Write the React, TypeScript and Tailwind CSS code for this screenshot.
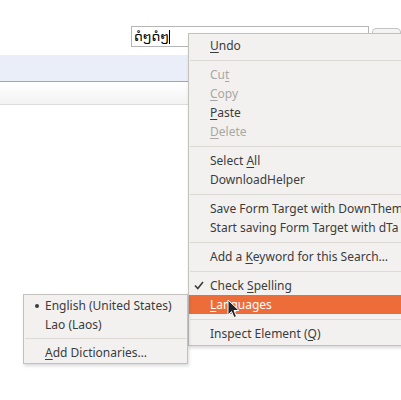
import React from 'react';

type Item =
  | { sep: true }
  | {
      sep?: false;
      pre: string;
      u?: string;
      post?: string;
      disabled?: boolean;
      check?: boolean;
      bullet?: boolean;
      active?: boolean;
    };

const mainItems: Item[] = [
  { pre: '', u: 'U', post: 'ndo' },
  { sep: true },
  { pre: 'Cu', u: 't', post: '', disabled: true },
  { pre: '', u: 'C', post: 'opy', disabled: true },
  { pre: '', u: 'P', post: 'aste' },
  { pre: '', u: 'D', post: 'elete', disabled: true },
  { sep: true },
  { pre: 'Select ', u: 'A', post: 'll' },
  { pre: 'DownloadHelper' },
  { sep: true },
  { pre: 'Save Form Target with DownThemAll!' },
  { pre: 'Start saving Form Target with dTa OneClick' },
  { sep: true },
  { pre: 'Add a ', u: 'K', post: 'eyword for this Search…' },
  { sep: true },
  { pre: 'Check ', u: 'S', post: 'pelling', check: true },
  { pre: '', u: 'L', post: 'anguages', active: true },
  { sep: true },
  { pre: 'Inspect Element (', u: 'Q', post: ')' },
];

const subItems: Item[] = [
  { pre: 'English (United States)', bullet: true },
  { pre: 'Lao (Laos)' },
  { sep: true },
  { pre: '', u: 'A', post: 'dd Dictionaries…' },
];

const MenuRows: React.FC<{ items: Item[]; indent: string; sepH: string }> = ({
  items,
  indent,
  sepH,
}) => (
  <>
    {items.map((it, i) => {
      if (it.sep) {
        return (
          <div key={i} className={`${sepH} flex items-center px-px`}>
            <div className="h-px w-full bg-[#dcdad5]" />
          </div>
        );
      }
      const color = it.active
        ? 'bg-[#ec6c3a] text-white'
        : it.disabled
        ? 'text-[#a9a7a3]'
        : 'text-[#3c3c3c]';
      return (
        <div
          key={i}
          className={`relative h-[19px] flex items-center whitespace-nowrap ${indent} ${color}`}
        >
          {it.check && (
            <svg
              className="absolute left-[5px] top-[5px]"
              width="10"
              height="9"
              viewBox="0 0 10 9"
            >
              <path d="M1 4.5 L3.8 7.5 L9 1" fill="none" stroke="#3c3c3c" strokeWidth="1.6" />
            </svg>
          )}
          {it.bullet && (
            <span className="absolute left-[11px] top-[8px] w-[4px] h-[4px] rounded-full bg-[#3c3c3c]" />
          )}
          <span>
            {it.pre}
            {it.u && <span className="underline underline-offset-2">{it.u}</span>}
            {it.post}
          </span>
        </div>
      );
    })}
  </>
);

export default function App() {
  return (
    <div
      className="relative w-[401px] h-[400px] bg-white overflow-hidden"
      style={{ fontFamily: '"Noto Sans", "DejaVu Sans", sans-serif' }}
    >
      {/* top bar with search */}
      <div className="h-[26px]" />
      <div className="flex h-[21px] items-start">
        <div className="ml-[131px] w-[242px] h-[21px] border border-[#b5b5b5] bg-white flex items-center pl-[2px]">
          <span className="text-[13px] text-black leading-none" style={{ fontFamily: '"DejaVu Sans", sans-serif' }}>
            ດໍໆດໍໆ
          </span>
          <span className="w-px h-[14px] bg-black" />
        </div>
        <div className="ml-[3px] mt-[2px] w-[30px] h-[19px] border border-[#c4c4c4] rounded-sm bg-[#f4f4f4]" />
      </div>
      <div className="h-[8px]" />
      <div className="h-[27px] bg-[#e9eef9] border-b border-[#8fa6cf]" />
      <div className="h-[23px] bg-gradient-to-b from-white to-[#f3f3f3] border-b border-[#dddddd]" />

      {/* main context menu */}
      <div className="absolute left-[188px] top-[33px] w-[240px] bg-[#f2f1f0] border border-[#c3c1bd] py-[2px] text-[12px] shadow-[1px_2px_3px_rgba(0,0,0,0.15)]">
        <MenuRows items={mainItems} indent="pl-[21px]" sepH="h-[10px]" />
        {/* mouse pointer */}
        <svg
          className="absolute left-[38px] top-[265px]"
          width="13"
          height="20"
          viewBox="0 0 13 20"
        >
          <path
            d="M1 1 L1 16 L4.5 12.5 L7 18.5 L9.5 17.5 L7 11.5 L12 11.5 Z"
            fill="#222"
            stroke="white"
            strokeWidth="1"
            strokeLinejoin="round"
          />
        </svg>
      </div>

      {/* languages submenu */}
      <div className="absolute left-[23px] top-[294px] w-[165px] bg-[#f2f1f0] border border-[#c3c1bd] py-px text-[12px] shadow-[1px_2px_3px_rgba(0,0,0,0.15)]">
        <MenuRows items={subItems} indent="pl-[21px]" sepH="h-[9px]" />
      </div>
    </div>
  );
}
